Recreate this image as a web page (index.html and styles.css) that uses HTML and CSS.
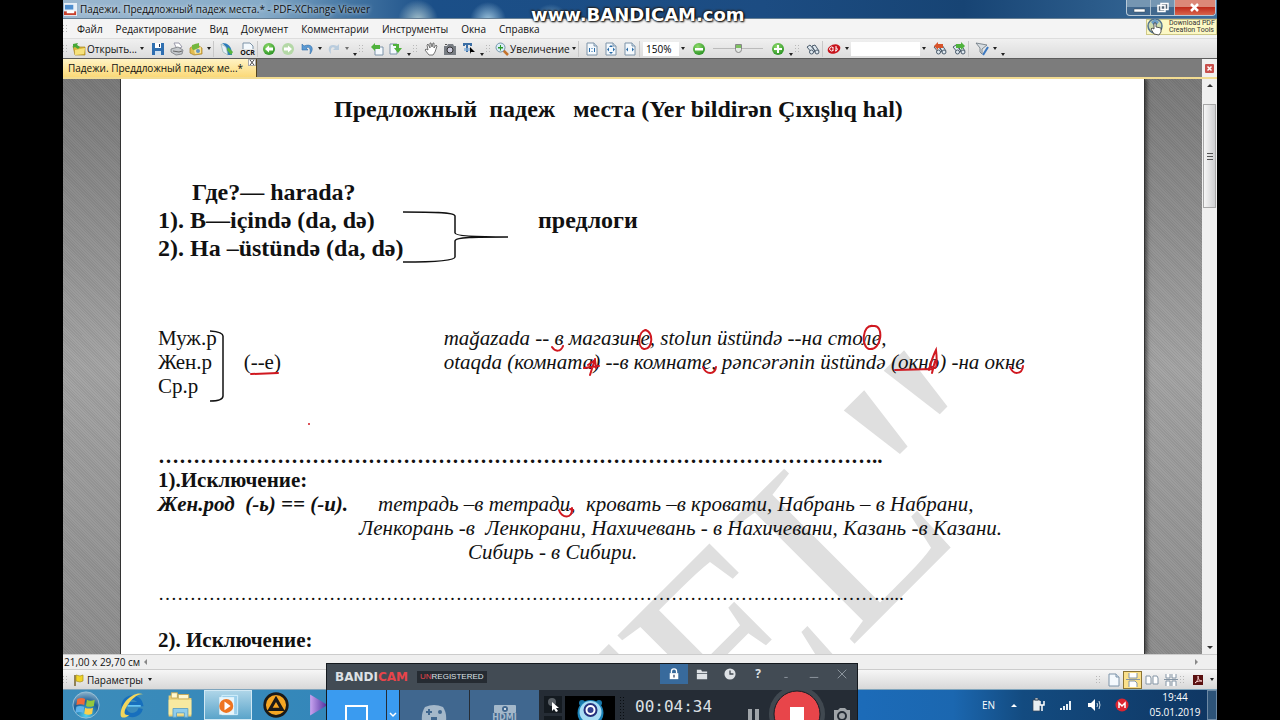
FILE: index.html
```
<!DOCTYPE html>
<html lang="ru">
<head>
<meta charset="utf-8">
<title>Падежи - PDF-XChange Viewer</title>
<link rel="stylesheet" href="styles.css">
</head>
<body>
<svg class="defs" aria-hidden="true">
  <defs>
    <radialGradient id="gGreen" cx=".4" cy=".3" r=".8"><stop offset="0" stop-color="#8fdc6a"/><stop offset="1" stop-color="#1f8a1c"/></radialGradient>
    <radialGradient id="gOrb" cx=".5" cy=".9" r=".9"><stop offset="0" stop-color="#4fd0f0"/><stop offset=".6" stop-color="#1c5f97"/><stop offset="1" stop-color="#8fb4cc"/></radialGradient>
    <linearGradient id="gViolet" x1="0" x2="1"><stop offset="0" stop-color="#c9a4f0"/><stop offset="1" stop-color="#4a2a9c"/></linearGradient>
    <symbol id="binoc" viewBox="0 0 14 14"><g fill="#dfe8ef" stroke="#4c5c6c"><path d="M1 5l3-2 5 6-3 2zM6 4l3-1 4 6-3 2z"/><circle cx="5.500" cy="10" r="2"/><circle cx="11" cy="10" r="2"/></g></symbol>
    <symbol id="doc" viewBox="0 0 14 14"><path d="M2 1h7l3 3v9H2z" fill="#f4f9fd" stroke="#7c93a8"/><path d="M9 1v3h3" fill="#cfe0ee" stroke="#7c93a8"/></symbol>
  </defs>
</svg>
<div class="screen">
  <header class="titlebar">
    <svg class="appicon" viewBox="0 0 14 14"><rect width="14" height="14" fill="#e8f0f8"/><path d="M1 2h9v5H1z" fill="#4f8fd0"/><path d="M0 9h13v4H0z" fill="#c8402c"/><path d="M3 8h8v3H3z" fill="#fff"/></svg>
    <h1 class="title">Падежи. Преддложный падеж места.* - PDF-XChange Viewer</h1>
    <div class="winbtns">
      <button aria-label="Свернуть"><svg viewBox="0 0 24 15"><path d="M7 9h11v3H7z" fill="#fff" stroke="#345" stroke-width=".5"/></svg></button>
      <button aria-label="Развернуть"><svg viewBox="0 0 24 15"><path d="M10 3.500h7v6h-7zM7 5.500h7v6H7z" fill="#567" stroke="#fff" stroke-width="1.500"/></svg></button>
      <button class="close" aria-label="Закрыть"><svg viewBox="0 0 24 15"><path d="M8 4l7 7M15 4l-7 7" stroke="#fff" stroke-width="2.500"/></svg></button>
    </div>
  </header>
  <nav class="menubar">
    <i class="grip"></i>
    <button>Файл</button><button>Редактирование</button><button>Вид</button><button>Документ</button><button>Комментарии</button><button>Инструменты</button><button>Окна</button><button>Справка</button>
    <a class="promo" href="#"><svg viewBox="0 0 18 18"><circle cx="8" cy="8" r="7" fill="#cfdcae" stroke="#54748f" stroke-width="1.500"/><path d="M4 4l4-3 4 3-4 5z" fill="#6b9bc5"/><path d="M7 16l-3-5 1-1 2 1V5h2v4l5 1v4l-2 3z" fill="#fff" stroke="#333" stroke-width=".8"/></svg><span>Download PDF<br>Creation Tools</span></a>
  </nav>
  <div class="toolbar" role="toolbar">
    <i class="grip"></i>
    <button class="open"><svg viewBox="0 0 14 14"><path d="M1 4h5l1 1h6v8H3z" fill="#d9b63a" stroke="#a88420" stroke-width=".7"/><path d="M3 8l10-2-1 6-9 1z" fill="#f7e27c"/><path d="M1 2l5-1-1 2 3 2-2 2-3-2-2 1z" fill="#45a838"/></svg>Открыть...</button>
    <button class="caret" aria-label="Ещё"></button><i class="s2"></i>
    <button class="tb" aria-label="Сохранить"><svg viewBox="0 0 14 14"><path d="M1 1h12v12H1z" fill="#2f6fb0"/><path d="M4 1h6v5H4z" fill="#fff"/><path d="M4 9h6v4H4z" fill="#cfe0ef"/><path d="M8 2h1v3H8z" fill="#235"/></svg></button>
    <button class="tb" aria-label="Печать"><svg viewBox="0 0 14 14"><path d="M4 1h5l3 4-5 2z" fill="#fff" stroke="#99a"/><path d="M1 7l7-2 5 3-1 4-6 1-5-3z" fill="#c4c8cc" stroke="#777b80" stroke-width=".8"/><path d="M3 9l6 1 3-1" stroke="#666" fill="none"/></svg></button>
    <button class="tb" aria-label="Почта"><svg viewBox="0 0 14 14"><path d="M1 6l6-4 6 4v6l-8 1-4-2z" fill="#e3bd50" stroke="#a57c24" stroke-width=".7"/><path d="M3 3l7-2v5L6 9 3 7z" fill="#72b840"/><path d="M5 8l7-3v6l-6 1z" fill="#f8e5a0"/><circle cx="9" cy="9" r="2" fill="#6597bf"/></svg></button>
    <button class="caret" aria-label="Ещё"></button><i class="sep s4"></i>
    <button class="tb" aria-label="Экспорт"><svg viewBox="0 0 14 14"><path d="M2 1c6 0 10 3 10 12H7C8 8 6 4 2 1z" fill="#2c7dbb"/><path d="M1 2l5 3 2 8-5-3z" fill="#e8f2f8" stroke="#8aa" stroke-width=".6"/><path d="M8 5l5 5-2 3-4-5z" fill="#58b540"/></svg></button><i class="s2"></i>
    <button class="tb ocr" aria-label="Распознать"><svg viewBox="0 0 14 7"><path d="M2 7V1h7l3 3v3" fill="#f4f9fd" stroke="#7c93a8"/></svg><span>OCR</span></button><i class="sep s2"></i>
    <button class="tb" aria-label="Назад"><svg viewBox="0 0 14 14"><circle cx="7" cy="7" r="6" fill="url(#gGreen)"/><path d="M3 7l4-3.500v2h4v3H7v2z" fill="#fff"/></svg></button>
    <button class="tb" aria-label="Вперёд"><svg viewBox="0 0 14 14"><circle cx="7" cy="7" r="6" fill="#b4d8a6"/><path d="M11 7L7 3.500v2H3v3h4v2z" fill="#fff"/></svg></button>
    <button class="tb" aria-label="Отменить"><svg viewBox="0 0 14 14"><path d="M2 2v6h6L6 6c3-2 5 0 4 6 5-6 1-11-6-8z" fill="#5b9bd5" stroke="#356fa8" stroke-width=".6"/></svg></button>
    <button class="caret" aria-label="Ещё"></button>
    <button class="tb faded" aria-label="Повторить"><svg viewBox="0 0 14 14"><path d="M12 2v6H6l2-2C5 4 3 6 4 12-1 6 3 1 10 4z" fill="#9bbbd8"/></svg></button>
    <button class="caret faded" aria-label="Ещё"></button><button class="caret low" aria-label="Настройка"></button>
    <i class="grip"></i>
    <button class="tb" aria-label="Повернуть влево"><svg viewBox="0 0 14 14"><path d="M5 5h8v8H5z" fill="#f4f9fd" stroke="#7c93a8"/><path d="M1 5l4-4v2h5v4H5v2z" fill="#4fb23c"/></svg></button>
    <button class="tb" aria-label="Повернуть вправо"><svg viewBox="0 0 14 14"><path d="M1 2h7v10H1z" fill="#f4f9fd" stroke="#7c93a8"/><path d="M4 2h6v4h3l-4 5-4-5h2V4H4z" fill="#4fb23c"/></svg></button>
    <button class="caret low" aria-label="Настройка"></button><i class="grip"></i>
    <button class="tb" aria-label="Рука"><svg viewBox="0 0 14 14"><path d="M5 13L1 8l1-1 2 1-1-5 1-1 2 4V1h1l1 4 1-4h1v5l2-3 1 1-2 6-2 3z" fill="#fff" stroke="#555" stroke-width=".8"/></svg></button>
    <button class="tb" aria-label="Снимок"><svg viewBox="0 0 14 14"><path d="M1 4h3l1-2h5l1 2h2v9H1z" fill="#777c82"/><circle cx="7" cy="8" r="3" fill="#ccd" stroke="#333"/><path d="M2 2h2v1H2z" fill="#555"/></svg></button>
    <button class="tb" aria-label="Выделение"><svg viewBox="0 0 14 14"><path d="M1 1h9v3H8V3H6v7H4V3H3v1H1z" fill="#3b6ea5"/><path d="M2 6h7v3H2z" fill="#80aedb" opacity=".7"/><path d="M8 5l5 5H9l-1 2z"/></svg></button>
    <button class="caret low" aria-label="Настройка"></button><i class="grip"></i>
    <button class="zoomb"><svg viewBox="0 0 14 14"><path d="M8 8l5 5" stroke="#c4732c" stroke-width="2.500"/><circle cx="5.500" cy="5.500" r="4.500" fill="#d8eef8" stroke="#7796aa"/><path d="M5 3h1v2h2v1.500H6V8.500H5v-2H3V5h2z" fill="#2a9a2a"/></svg>Увеличение</button>
    <button class="caret" aria-label="Ещё"></button><i class="sep s4"></i>
    <button class="tb" aria-label="Реальный размер"><svg viewBox="0 0 14 14"><use href="#doc"/><path d="M4.500 6v4M9.500 6v4M7 6v1M7 9v1" stroke="#2a6ca8" fill="none"/></svg></button>
    <button class="tb" aria-label="Страница целиком"><svg viewBox="0 0 14 14"><use href="#doc"/><path d="M7 3L5 5h4zM7 12l-2-2h4zM3 7.500l2-2v4zM11 7.500l-2-2v4z" fill="#2a6ca8"/></svg></button>
    <button class="tb" aria-label="По ширине"><svg viewBox="0 0 14 14"><use href="#doc"/><path d="M3 7.500l2-2v4zM11 7.500l-2-2v4z" fill="#2a6ca8"/></svg></button><i class="sep s4"></i>
    <input class="zoomval" aria-label="Масштаб" value="150%">
    <button class="caret" aria-label="Ещё"></button><i class="s2"></i>
    <button class="tb" aria-label="Уменьшить"><svg viewBox="0 0 14 14"><circle cx="7" cy="7" r="6" fill="url(#gGreen)"/><path d="M3 6h8v2.500H3z" fill="#fff"/></svg></button>
    <input class="slider" type="range" aria-label="Ползунок масштаба">
    <button class="tb" aria-label="Увеличить"><svg viewBox="0 0 14 14"><circle cx="7" cy="7" r="6" fill="url(#gGreen)"/><path d="M3 6h3V3h2v3h3v2H8v3H6V8H3z" fill="#fff"/></svg></button>
    <button class="caret low" aria-label="Настройка"></button><i class="grip"></i>
    <button class="tb" aria-label="Поиск"><svg viewBox="0 0 14 14"><use href="#binoc"/></svg></button><i class="sep s2"></i>
    <button class="tb" aria-label="Яндекс"><svg viewBox="0 0 14 14"><ellipse cx="7" cy="7" rx="6.500" ry="4.500" transform="rotate(-20 7 7)" fill="#c8141c"/><path d="M6 5.500a2 2 0 1 0 0 3M6 5v4M8 9c3 0 3-3 1-3M9 4v5" stroke="#fff" fill="none"/></svg></button>
    <button class="caret" aria-label="Ещё"></button>
    <input class="find" aria-label="Найти">
    <button class="caret" aria-label="Ещё"></button><i class="s2"></i>
    <button class="tb" aria-label="Найти назад"><svg viewBox="0 0 14 14"><use href="#binoc"/><path d="M1 4l4-4v2h5v4H5v2z" fill="#d8532a"/></svg></button>
    <button class="tb" aria-label="Найти далее"><svg viewBox="0 0 14 14"><use href="#binoc"/><path d="M13 4L9 0v2H4v4h5v2z" fill="#4fb23c"/></svg></button><i class="sep s4"></i>
    <button class="tb" aria-label="Фильтр"><svg viewBox="0 0 14 14"><path d="M1 1l11 2-5 4v5l-2-2V6z" fill="#d7dde2" stroke="#68737c" stroke-width=".8"/><path d="M13 5L8 13" stroke="#3b78c0" stroke-width="2"/></svg></button>
    <button class="caret" aria-label="Ещё"></button><button class="caret low" aria-label="Настройка"></button>
  </div>
  <div class="tabs">
    <div class="tab"><span>Падежи. Преддложный падеж ме...*</span><button aria-label="Закрыть вкладку"><svg viewBox="0 0 6 5"><path d="M1 0l4 5M5 0L1 5" stroke="#444"/></svg></button></div>
    <button class="tabclose" aria-label="Закрыть документ"><svg viewBox="0 0 9 9"><rect width="9" height="9" rx="1" fill="#c9504c"/><path d="M2.500 2.500l4 4M6.500 2.500l-4 4" stroke="#fff" stroke-width="1.500"/></svg></button>
  </div>
  <main class="work">
    <div class="canvas">
      <article class="page">
        <svg class="mark" aria-hidden="true"><g transform="rotate(-45)"><text x="-212" y="918">TEL</text><text class="quote" x="258" y="942">"</text></g></svg>
        <h2 class="big heading">Предложный  падеж   места (Yer bildirən Çıxışlıq hal)</h2>
        <section class="big where">
          <p class="q">Где?— harada?</p>
          <div class="two"><p>1). В—içində (da, də)</p><p>предлоги</p></div>
          <p>2). На –üstündə (da, də)</p>
        </section>
        <section class="gender">
          <div><p>Муж.р</p><p>Жен.р</p><p>Ср.р</p></div>
          <p class="e">(--е)</p>
          <div class="ex"><p>mağazada -- в магазине, stolun üstündə --на столе,</p><p>otaqda (комната) --в комнате, pəncərənin üstündə (окно) -на окне</p></div>
        </section>
        <p class="dots bold">…………………………………………………………………………………………..</p>
        <h3>1).Исключение:</h3>
        <section class="rule">
          <p class="lead">Жен.род  (-ь) == (-и).</p>
          <p class="r1">тетрадь –в тетради,  кровать –в кровати, Набрань – в Набрани,</p>
        </section>
        <p class="r2">Ленкорань -в  Ленкорани, Нахичевань - в Нахичевани, Казань -в Казани.</p>
        <p class="r3">Сибирь - в Сибири.</p>
        <p class="dots thin">…………………………………………………………………………………………………….....</p>
        <h3>2). Исключение:</h3>
        <svg class="ink" aria-hidden="true">
          <g fill="none" stroke="#111" stroke-width="1.500"><path d="M282 133c25 0 52 0 52 4v17c0 3 20 4 53 4-33 0-53 0-53 4v16c0 4-25 5-52 5"/><path d="M89 252q13 1 13 5v60q0 5-13 5"/></g>
          <g fill="none" stroke="#d01820" stroke-width="2" stroke-linecap="round"><path d="M130 295l27-1M431 268c3 5 9 5 11-1M525 251c-8 1-9 17-2 19 9 1 10-18 1-19M752 247c-11-2-12 21-4 23 13 2 15-24 5-23M463 289l15-2M474 280l-5 16M467 286l7-5 1 8M582 288c3 8 12 8 13 0M774 291l38-1M808 291c2-8 5-16 7-20 1 8 1 18-1 18s-3-4-7 1M811 294l3-12M889 288c3 8 12 8 13-1M438 431c2 8 14 10 13-2M449 430l3 1"/><path d="M188 345v0"/></g>
        </svg>
      </article>
    </div>
    <div class="scroll"><b class="up"></b><div class="thumb"><i></i><i></i><i></i></div><b class="down"></b></div>
  </main>
  <div class="status"><span>21,00 x 29,70 см</span><b class="left"></b><b class="right"></b></div>
  <div class="options">
    <i class="grip"></i>
    <button class="opt"><svg viewBox="0 0 12 14"><path d="M2 2v11" stroke="#76622a" stroke-width="1.500"/><path d="M3 2l4 1 3-1v6L7 9 3 8z" fill="#f0d428" stroke="#a8901c" stroke-width=".7"/></svg>Параметры</button><button class="caret" aria-label="Ещё"></button>
    <div class="views"><i class="grip"></i>
      <button aria-label="Одна страница"><svg viewBox="0 0 14 14"><use href="#doc"/></svg></button>
      <button class="on" aria-label="Непрерывно"><svg viewBox="0 0 14 14"><path d="M3 0v5h8V0M3 14V8h6l2 2v4M0 6.500h14" fill="#fff" stroke="#8495a5"/></svg></button>
      <button aria-label="Разворот"><svg viewBox="0 0 14 14"><path d="M1 3h4l1 2v6H1zM8 3h4l1 2v6H8z" fill="#fff" stroke="#8495a5"/></svg></button>
      <button aria-label="Непрерывный разворот"><svg viewBox="0 0 14 14"><path d="M2 1v4h4V1M8 1v4h4V1M2 13V8h4v5M8 13V8h4v5M0 6.500h14" fill="#fff" stroke="#8495a5"/></svg></button>
      <i class="grip"></i>
      <button aria-label="Adobe"><svg viewBox="0 0 14 14"><path d="M2 2h10v10H2z" fill="#5a1010"/><path d="M4 10c4-3 3-7 3-7 0 3 1 5 4 5-3 0-5 0-7 2z" fill="none" stroke="#f3c8c8"/></svg></button>
      <button class="caret" aria-label="Ещё"></button></div>
  </div>
  <footer class="taskbar">
    <button aria-label="Пуск"><svg viewBox="0 0 32 32"><circle cx="16" cy="16" r="15" fill="url(#gOrb)" stroke="#9fc4d8"/><path d="M6 9q5-2 9 0l-1 7q-4-2-9 0z" fill="#ef6a3a"/><path d="M17 10q4 2 9 0l-1 7q-5 2-9 0z" fill="#93c83e"/><path d="M5 18q4-2 9 0l-1 7q-4-2-9 0z" fill="#5fb4ec"/><path d="M15 19q4 2 9 0l-1 7q-4 2-9 0z" fill="#fbd04a"/></svg></button>
    <button aria-label="Internet Explorer"><svg viewBox="0 0 32 32"><path d="M26 20a10 10 0 1 1 0-5H12" fill="none" stroke="#176fbd" stroke-width="5"/><path d="M26 17H11" stroke="#67c5f2" stroke-width="2"/><path d="M29 4C20-1 3 12 3 27c0 5 6 4 10 0-8 2-6-5-2-11C16 8 24 2 29 4z" fill="#f2d65c"/></svg></button>
    <button aria-label="Проводник"><svg viewBox="0 0 32 32"><path d="M3 5h8l2 3h16v21H3z" fill="#e8cf78"/><path d="M6 2h7v6H6zM14 4h12v5H14z" fill="#fff8d0" stroke="#c8a850"/><path d="M3 10h26v17H3z" fill="#f7e9a0"/><path d="M8 20h17v10h-4v-5h-9v5H8z" fill="#8fcdec" stroke="#5c9fc4"/></svg></button>
    <button class="active" aria-label="Проигрыватель"><svg viewBox="0 0 32 32"><path d="M9 5h18v22H9z" fill="#9bd0ec" stroke="#d8f2ff"/><path d="M6 7h17v20H6z" fill="#e7f5fb"/><circle cx="14" cy="17" r="8" fill="#ee7420"/><path d="M12 12l7 5-7 5z" fill="#fff"/></svg></button>
    <button aria-label="AIMP"><svg viewBox="0 0 32 32"><circle cx="16" cy="16" r="13" fill="#f5a623" stroke="#1b1a18" stroke-width="3"/><path d="M16 9l7 12H9z" fill="none" stroke="#1b1a18" stroke-width="3.500"/></svg></button>
    <button aria-label="KMPlayer"><svg viewBox="0 0 32 32"><path d="M7 4l20 12L7 28z" fill="url(#gViolet)"/></svg></button>
    <div class="tray"><span class="lang">EN</span><b class="up"></b>
      <svg viewBox="0 0 14 14"><path d="M2 2h7v11H2zM4 0h3v2H4z" fill="#e8eef2" stroke="#345" stroke-width=".7"/><path d="M9 3v4h4V3M11 7v6" stroke="#fff" fill="none" stroke-width="1.500"/></svg>
      <svg viewBox="0 0 14 14"><path d="M1 12v-2h2v2zM4 12V8h2v4zM7 12V6h2v6zM10 12V3h2v9z" fill="#e8f0f6"/></svg>
      <svg viewBox="0 0 14 14"><path d="M1 5h3l4-4v12L4 9H1z" fill="#fff"/><path d="M10 5q1 2 0 4M12 3q2 4 0 8" stroke="#d0dce6" fill="none"/></svg>
      <svg viewBox="0 0 14 14"><circle cx="7" cy="7" r="6.500" fill="#dc2430"/><path d="M4 10V5l3 3 3-3v5" stroke="#fff" stroke-width="1.500" fill="none"/></svg>
      <time>19:44<br>05.01.2019</time><i class="show"></i></div>
  </footer>
  <p class="stamp">www.BANDICAM.com</p>
  <aside class="rec">
    <div class="rechead"><strong>BANDI<em>CAM</em></strong><span class="unreg"><em>UN</em>REGISTERED</span>
      <div class="rectools">
        <button class="on" aria-label="Поверх окон"><svg viewBox="0 0 14 14"><path d="M4 6V4a3 3 0 0 1 6 0v2" fill="none" stroke="#fff" stroke-width="1.500"/><path d="M2 6h10v7H2z" fill="#fff"/><path d="M7 8v3" stroke="#346" stroke-width="1.500"/></svg></button>
        <button aria-label="Папка"><svg viewBox="0 0 14 14"><path d="M1 2h5l1 2h6v2H1zM1 7h12v6H1z" fill="#dde1e5"/></svg></button>
        <button aria-label="Таймер"><svg viewBox="0 0 14 14"><circle cx="7" cy="7" r="6.500" fill="#dde1e5"/><path d="M7 3v4h4" stroke="#404850" stroke-width="1.500" fill="none"/></svg></button>
        <button aria-label="Справка">?</button>
        <button aria-label="Компактный"><svg viewBox="0 0 14 14"><path d="M5 11h4" stroke="#98a0a8"/></svg></button>
        <button aria-label="Свернуть"><svg viewBox="0 0 14 14"><path d="M2 11h10" stroke="#98a0a8"/></svg></button>
        <button aria-label="Закрыть"><svg viewBox="0 0 14 14"><path d="M2 2l10 10M12 2L2 12" stroke="#98a0a8"/></svg></button>
      </div></div>
    <div class="recbody">
      <button class="mode lit" aria-label="Экран"><svg viewBox="0 0 59 30"><path d="M19 16h21v20H19z" fill="none" stroke="#fff" stroke-width="2"/></svg></button>
      <button class="more" aria-label="Ещё"><svg viewBox="0 0 12 30"><path d="M3 23l3 3 3-3" fill="none" stroke="#fff" stroke-width="1.500"/></svg></button>
      <button class="mode" aria-label="Игра"><svg viewBox="0 0 68 30"><path d="M25 17q9-4 18 0 4 6 3 14H22q-1-8 3-14z" fill="#a4b8ca"/><path d="M29 19v6M26 22h6" stroke="#40678f" stroke-width="2"/><circle cx="40" cy="22" r="2" fill="#40678f"/><path d="M31 27h6v4h-6z" fill="#40678f"/></svg></button>
      <button class="mode hdmi"><svg viewBox="0 0 24 10"><rect x="1" y="1" width="22" height="8" rx="1" fill="#a4b8ca"/><circle cx="12" cy="5" r="3" fill="#40678f"/><circle cx="12" cy="5" r="1" fill="#fff"/></svg>HDMI</button>
      <svg class="cursor" viewBox="0 0 18 30"><path d="M0 6h18v17H0zM0 26h18v4H0z" fill="#141a20"/><circle cx="8" cy="12" r="4" fill="#585e64"/><path d="M8 12v9l2-2 2 3 2-1-2-3h3z" fill="#fff"/></svg>
      <svg class="cam" viewBox="0 0 50 30"><path d="M0 6h50v24H0z" fill="#000"/><circle cx="17" cy="13" r="3" fill="#1876a8"/><circle cx="34" cy="13" r="3" fill="#1876a8"/><circle cx="25.500" cy="23" r="13" fill="#1c83b8"/><circle cx="25.500" cy="22" r="11" fill="#a8dcf4"/><circle cx="25.500" cy="20" r="6" fill="#fff" stroke="#25307c" stroke-width="2"/><circle cx="25.500" cy="20" r="3" fill="#324090"/></svg>
      <i class="level"></i>
      <span class="timer">00:04:34</span>
      <button class="pause" aria-label="Пауза"><svg viewBox="0 0 14 30"><path d="M1 19h4v11H1zM8 19h4v11H8z" fill="#a0a5a9"/></svg></button>
      <button class="stop" aria-label="Стоп"><svg viewBox="0 0 56 30"><circle cx="28" cy="24" r="28" fill="#404850"/><circle cx="28" cy="24" r="23" fill="#e8454a" stroke="#171d24"/><path d="M21 17h14v13H21z" fill="#fff"/></svg></button>
      <button class="shot" aria-label="Снимок экрана"><svg viewBox="0 0 18 30"><path d="M1 20h4l2-2h5l2 2h3v12H1z" fill="#a0a5a9"/><circle cx="9" cy="26" r="4" fill="#a0a5a9" stroke="#252c35" stroke-width="2"/></svg></button>
    </div>
  </aside>
</div>
</body>
</html>
```
FILE: styles.css
```
* { box-sizing: border-box; margin: 0; padding: 0; }
body { background: #000; }
button { border: 0; background: none; color: inherit; font: inherit; line-height: inherit; flex: none; }
input { border: 0; font: inherit; border-radius: 0; min-width: 0; }
svg { display: block; flex: none; }
em { font-style: normal; }
.defs { position: absolute; width: 0; height: 0; }
.screen { position: relative; display: flex; flex-direction: column; height: 100vh; margin: 0 63px; overflow: hidden; background: #eee; color: #111; font: 10px/14px "Open Sans", "Noto Sans", sans-serif; }

.titlebar { display: flex; align-items: center; flex: none; height: 19px; padding-left: 1px; background: radial-gradient(circle at 355px 20px, #a3c0cb 0, transparent 20px), radial-gradient(circle at 425px 20px, #9cc3dc 0, transparent 18px), radial-gradient(circle at 488px 22px, #86b0cc 0, transparent 18px), linear-gradient(90deg, #9cb8d0, #86abc8 200px, #4879a5 280px, #1b4f88 370px, #1c4c82 700px, #174474 900px, #3d709e); border-bottom: 1px solid #667f94; }
.appicon { width: 13px; height: 13px; margin-right: 3px; }
.title { font-size: 10px; font-weight: 400; line-height: 16px; white-space: nowrap; color: #111; text-shadow: 0 0 4px #fff; }
.winbtns { display: flex; align-self: flex-start; margin-left: auto; margin-right: 1px; height: 16px; border: 1px solid #b9cad8; border-top: 0; border-radius: 0 0 4px 4px; overflow: hidden; background: linear-gradient(#7596b2 50%, #41688e 50%); }
.winbtns button { width: 24px; border-right: 1px solid #a8bccc; }
.winbtns .close { width: 40px; border: 0; background: linear-gradient(#dc8878 45%, #c02c1c 50%, #d8654c); }
.winbtns svg { width: 24px; height: 15px; margin: auto; }

.menubar { display: flex; align-items: center; flex: none; height: 19px; background: #f4f4f4; gap: 13px; }
.menubar .grip { margin-right: -7px; }
.grip { flex: none; width: 8px; height: 10px; background: radial-gradient(circle, #b8b8b8 1px, transparent 1px) 2px 0 / 3px 3px; background-clip: content-box; padding-right: 2px; }
.promo { display: flex; align-items: center; align-self: flex-start; gap: 4px; margin-left: auto; width: 71px; height: 16px; background: #fcf8c4; border: 1px solid #cfc988; color: #333; text-decoration: none; font: 7px/7px Roboto, sans-serif; white-space: nowrap; }
.promo svg { width: 18px; height: 18px; }

.toolbar { display: flex; align-items: center; flex: none; height: 20px; background: linear-gradient(#f0f0f0, #dcdcdc); border-top: 1px solid #ddd; }
.tb { width: 19px; height: 18px; }
.tb svg, .open svg, .zoomb svg { width: 14px; height: 14px; margin: auto; }
.open, .zoomb { display: flex; align-items: center; white-space: nowrap; }
.open svg, .zoomb svg { margin: 0 1px; }
.open { width: 67px; }
.zoomb { width: 76px; }
.tb.ocr svg { width: 14px; height: 7px; }
.ocr span { display: block; font-size: 7px; line-height: 7px; font-weight: 700; }
.caret { width: 8px; height: 12px; }
.caret::before { content: ""; display: block; width: 0; margin: auto; border: 2px solid transparent; border-top: 3px solid #222; border-bottom: 0; }
.caret.low { align-self: flex-end; height: 8px; }
.faded { opacity: .6; }
.s2 { flex: none; width: 2px; }
.s4 { flex: none; width: 4px; }
.sep { height: 16px; border-left: 1px solid #c8c8c8; }
.zoomval { width: 36px; height: 14px; padding-left: 3px; background: #fff; }
.find { width: 69px; height: 14px; background: #fff; }
.slider { width: 50px; height: 12px; margin: 0 5px; appearance: none; background: linear-gradient(#bbb, #bbb) center / 100% 1px no-repeat; }
.slider::-webkit-slider-thumb { appearance: none; width: 7px; height: 9px; background: linear-gradient(#7cc060 3px, #e4e8e4 3px); border: 1px solid #888; border-radius: 0 0 4px 4px; }

.tabs { display: flex; flex: none; height: 21px; border-top: 1px solid #5c5c5c; background: #7c7c7c; border-bottom: 2px solid #f2dc92; }
.tab { display: flex; width: 194px; background: linear-gradient(#fff3c4, #fbd978); border-right: 1px solid #54431c; padding-left: 5px; white-space: nowrap; line-height: 19px; }
.tab button { width: 8px; height: 7px; margin-left: auto; background: #fff; border: 1px solid #aaa; }
.tab svg { width: 6px; height: 5px; }
.tabclose { width: 15px; margin-left: auto; background: #f1f1f1; }
.tabclose svg { width: 9px; height: 9px; margin: auto; }

.work { display: flex; flex: 1; min-height: 0; }
.canvas { flex: 1; min-width: 0; padding: 0 58px; background: repeating-linear-gradient(45deg, #0001 0 1px, transparent 1px 2px), linear-gradient(#7c7c7c, #a6a6a6 50%, #909090); overflow: hidden; }
.page { position: relative; height: 100%; padding: 16px 0 0 37px; overflow: hidden; background: #fff; box-shadow: 0 0 0 1px #333, 3px 0 4px #0008; color: #111; font: 21px/24px "Liberation Serif", serif; }
.page section, .page p, .page h2, .page h3 { position: relative; }
.page p, .page h2, .page h3 { white-space: pre; }
.mark, .ink { position: absolute; left: 0; top: 0; width: 100%; height: 100%; }
.mark text { font-size: 265px; fill: #dfdfdf; }
.mark .quote { font-size: 300px; }
.big { font-size: 24px; line-height: 28px; font-weight: 700; }
.heading { margin-left: 176px; }
.where { margin-top: 55px; }
.q { padding-left: 34px; }
.two { display: flex; }
.two p:first-child { width: 380px; }
.gender { display: flex; margin-top: 64px; }
.e { width: 200px; margin-left: 27px; align-self: center; }
.ex { font-style: italic; }
.dots.bold { margin-top: 46px; font-weight: 700; }
.page h3 { font-size: 21px; line-height: 24px; }
.rule { display: flex; font-style: italic; }
.lead { width: 220px; font-weight: 700; }
.r2 { padding-left: 201px; font-style: italic; }
.r3 { padding-left: 310px; font-style: italic; }
.dots.thin { margin: 18px 0 22px; font-size: 19px; }

.scroll { display: flex; flex-direction: column; align-items: center; width: 15px; background: #f0f0f0; padding: 5px 1px; }
.scroll .thumb { display: flex; flex-direction: column; justify-content: center; align-items: center; gap: 2px; width: 13px; height: 104px; margin-top: 17px; border: 1px solid #a8a8a8; background: linear-gradient(90deg, #f6f6f6, #cfd0d2); }
.thumb i { width: 6px; height: 1px; background: #555; }
.down { margin-top: auto; border: 3px solid transparent; border-top-color: #333; border-bottom: 0; }
.up { border: 3px solid transparent; border-bottom-color: #333; border-top: 0; }
.status { display: flex; align-items: center; flex: none; height: 15px; padding: 0 19px 0 1px; background: #efefef; border-top: 1px solid #ccc; }
.left { margin-left: 4px; border: 3px solid transparent; border-right-color: #888; border-left: 0; }
.right { margin-left: auto; border: 3px solid transparent; border-left-color: #888; border-right: 0; }
.options { display: flex; align-items: center; flex: none; height: 20px; background: linear-gradient(#f6f6f6, #d8d8d8); border-top: 1px solid #ccc; }
.opt { display: flex; align-items: center; width: 74px; margin-right: 1px; }
.opt svg { width: 12px; height: 14px; margin: 0 2px; }
.views { display: flex; align-items: center; margin-left: auto; }
.views button { width: 19px; height: 18px; }
.views .caret { width: 10px; height: 12px; }
.views svg { width: 14px; height: 14px; margin: auto; }
.views .on { background: #fbe08a; border: 1px solid #8c7434; }

.taskbar { display: flex; align-items: center; flex: none; height: 31px; background: linear-gradient(90deg, #3c8cba, #3487ba 260px, #1c6bb8 800px, #1b67b0 890px, #134b80 960px, #0f3662); border-top: 1px solid #7fa5bd; }
.taskbar > button { width: 48px; height: 30px; }
.taskbar > button:first-child { width: 45px; }
.taskbar > button svg { width: 28px; height: 28px; margin: auto; }
.taskbar > .active { background: linear-gradient(#aed5e8, #5aa4ca); border: 1px solid #d0e8f4; }
.taskbar > button:nth-child(6) { width: 36px; }
.tray { display: flex; align-items: center; margin-left: auto; height: 30px; color: #fff; gap: 14px; }
.tray svg { width: 14px; height: 14px; }
.tray time { width: 64px; text-align: center; line-height: 15px; }
.lang { margin-right: 2px; }
.tray .up { border-bottom-color: #fff; }
.show { width: 10px; height: 30px; margin-left: -14px; border: 1px solid #6e8aa5; background: #2d5378; }

.stamp { position: absolute; left: 468px; top: 5px; font: 700 18px/20px "DejaVu Sans", sans-serif; color: #fff; text-shadow: 0 0 2px #000, 1px 1px 2px #000, -1px -1px 2px #333; }
.rec { position: absolute; left: 263px; bottom: 0; width: 532px; height: 57px; overflow: hidden; border: 1px solid #14191e; border-bottom: 0; background: #252c35; color: #dde1e5; }
.rechead { display: flex; align-items: center; height: 26px; padding-left: 8px; background: #424b54; }
.rechead strong { font: 700 12px/14px "DejaVu Sans", sans-serif; width: 74px; }
.rechead em { color: #e8444a; }
.unreg { margin-left: 8px; padding: 0 3px; background: #252b32; font: 8px/12px "Liberation Sans", sans-serif; }
.rectools { display: flex; align-self: flex-start; margin-left: auto; margin-right: 1px; }
.rectools button { width: 28px; height: 20px; font-weight: 700; font-size: 12px; }
.rectools .on { background: #386a9c; }
.rectools svg { width: 12px; height: 12px; margin: auto; }
.recbody { display: flex; height: 30px; }
.recbody svg { height: 30px; }
.mode { width: 69px; margin-right: 1px; background: #40678f; color: #a4b8ca; }
.mode svg { width: 68px; }
.mode.lit { width: 59px; background: #3a9bf0; }
.mode.lit svg { width: 59px; }
.more { width: 12px; margin-right: 1px; background: #3a9bf0; }
.more svg { width: 12px; }
.mode.hdmi { display: flex; flex-direction: column; align-items: center; justify-content: flex-start; padding-top: 14px; font: 700 8px/8px "DejaVu Sans", sans-serif; overflow: hidden; }
.mode.hdmi svg { width: 24px; height: 10px; }
.cursor { width: 18px; margin: 0 3px 0 4px; }
.cam { width: 50px; }
.level { width: 7px; height: 24px; margin: 6px 9px 0 4px; background: radial-gradient(circle, #0a0e12 1px, transparent 1px) 0 0 / 3px 3px; }
.timer { width: 112px; padding-top: 7px; font: 16px/20px "DejaVu Sans Mono", monospace; }
.pause svg { width: 14px; }
.stop { margin: 0 8px; }
.stop svg { width: 56px; }
.shot svg { width: 18px; }
```
